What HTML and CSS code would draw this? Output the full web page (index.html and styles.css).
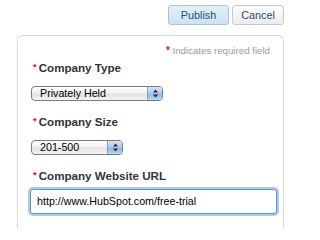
FILE: index.html
```html
<!DOCTYPE html>
<html lang="en">
<head>
<meta charset="utf-8">
<title>Company form</title>
<link rel="stylesheet" href="styles.css">
</head>
<body>
<div class="page">
<div class="toolbar">
  <button class="btn btn-primary btn-publish">Publish</button>
  <button class="btn btn-cancel">Cancel</button>
</div>
<div class="panel">
  <p class="req"><span class="req-star">*</span> Indicates required field</p>
  <div class="field">
    <div class="label"><span class="star">*</span>Company Type</div>
    <div class="select select-type">
      <span class="select-text">Privately Held</span>
      <span class="select-arrow"><svg width="7" height="9" viewBox="0 0 7 9"><path d="M3.5 0.5 L6 3.5 L1 3.5 Z" fill="#2a2a2a"/><path d="M1 5.5 L6 5.5 L3.5 8.5 Z" fill="#2a2a2a"/></svg></span>
    </div>
  </div>
  <div class="field">
    <div class="label"><span class="star">*</span>Company Size</div>
    <div class="select select-size">
      <span class="select-text">201-500</span>
      <span class="select-arrow"><svg width="7" height="9" viewBox="0 0 7 9"><path d="M3.5 0.5 L6 3.5 L1 3.5 Z" fill="#2a2a2a"/><path d="M1 5.5 L6 5.5 L3.5 8.5 Z" fill="#2a2a2a"/></svg></span>
    </div>
  </div>
  <div class="field">
    <div class="label label-input"><span class="star">*</span>Company Website URL</div>
    <div class="text-input">http://www.HubSpot.com/free-trial</div>
  </div>
</div>
</div>
</body>
</html>
```

FILE: styles.css
```css
html, body {
  margin: 0;
  padding: 0;
  background: #ffffff;
  font-family: "Liberation Sans", Arial, sans-serif;
  overflow: hidden;
}

.page {
  width: 304px;
  height: 229px;
  overflow: hidden;
}

.toolbar {
  display: flex;
  justify-content: flex-end;
  gap: 3px;
  padding: 5px 20px 0 0;
}

.btn {
  box-sizing: border-box;
  height: 20px;
  padding: 0;
  border: 1px solid #c9c9c9;
  border-radius: 3px;
  background: linear-gradient(#fdfdfd, #ececec);
  color: #1d4f7c;
  font-family: "Liberation Sans", Arial, sans-serif;
  font-size: 10.8px;
  line-height: 18px;
  text-align: center;
}

.btn-primary {
  border-color: #a4c7de;
  background: linear-gradient(#e3f0f8, #cde2f0);
}

.btn-publish { width: 61px; }
.btn-cancel { width: 52px; }

.panel {
  box-sizing: border-box;
  width: 267px;
  height: 194px;
  margin: 10px 0 0 17px;
  padding: 9px 6px 0 11px;
  border: 1px solid #d9d9d9;
  border-bottom: none;
  border-radius: 6px 6px 0 0;
}

.req {
  margin: 0 0 4px 0;
  padding-right: 7px;
  text-align: right;
  font-size: 9.7px;
  line-height: 12px;
  color: #9a9a9a;
}

.req-star {
  color: #e3110f;
  font-weight: bold;
  font-size: 10px;
}

.field {
  display: flex;
  flex-direction: column;
  align-items: flex-start;
  margin-bottom: 14px;
}

.label {
  padding-left: 4px;
  margin-bottom: 11px;
  font-size: 11.6px;
  line-height: 14px;
  font-weight: bold;
  color: #333333;
  display: flex;
  align-items: center;
}

.label-input {
  margin-bottom: 6px;
}

.star {
  color: #e3110f;
  font-size: 9.5px;
  font-weight: bold;
  margin-right: 2px;
  position: relative;
  top: -1px;
}

.select {
  box-sizing: border-box;
  display: flex;
  align-items: stretch;
  height: 15px;
  margin-left: 2px;
  border: 1px solid #7c7c7c;
  border-radius: 4px;
  background: linear-gradient(#ffffff, #f1f1f1 45%, #e2e2e2 55%, #f4f4f4);
  overflow: hidden;
}

.select-type { width: 132px; }
.select-size { width: 92px; }

.select-text {
  flex: 1;
  padding-left: 8px;
  font-size: 10.7px;
  line-height: 13px;
  color: #000000;
}

.select-arrow {
  width: 14px;
  display: flex;
  align-items: center;
  justify-content: center;
  border-left: 1px solid #8a9bb0;
  background: linear-gradient(#d6e6f8, #a9c8ee 50%, #8db5e8 55%, #bcd6f4);
}

.text-input {
  box-sizing: border-box;
  width: 247px;
  height: 25px;
  margin-left: 1px;
  padding-left: 6px;
  border: 1px solid #5d95cf;
  border-radius: 3px;
  box-shadow: 0 0 0 2px rgba(120, 166, 218, 0.6);
  font-size: 10.7px;
  line-height: 23px;
  color: #000000;
  background: #ffffff;
}
```
